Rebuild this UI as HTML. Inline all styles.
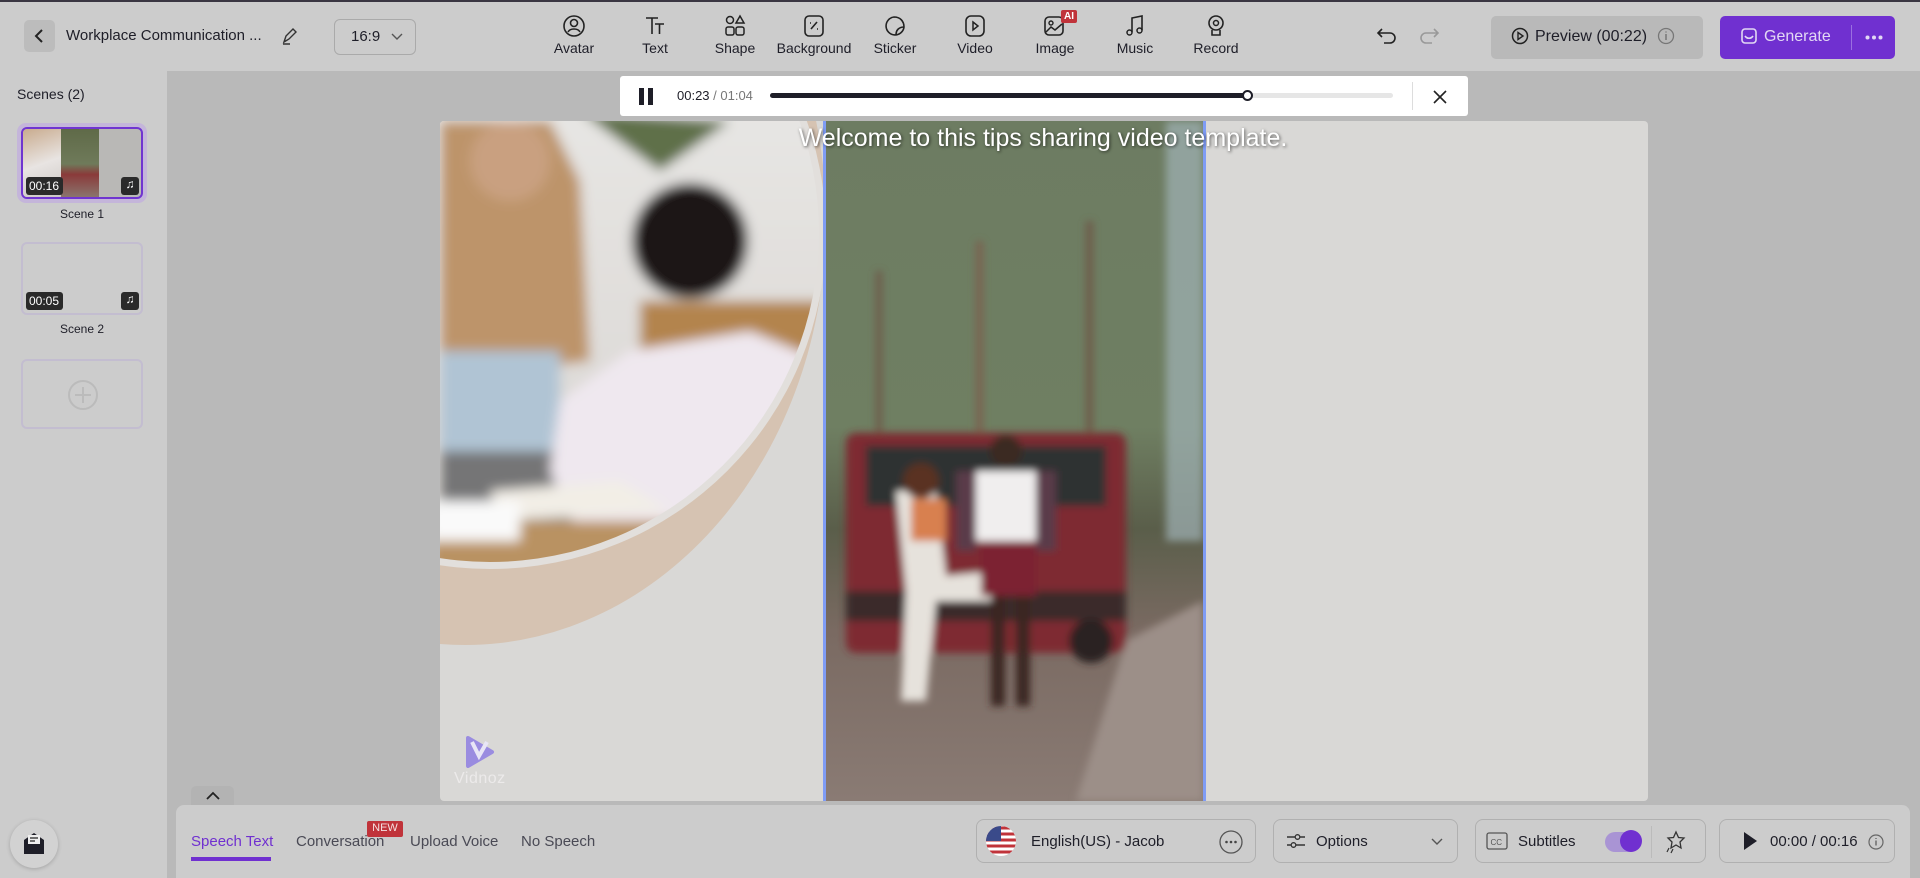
<!DOCTYPE html>
<html><head><meta charset="utf-8"><style>
*{box-sizing:border-box;margin:0;padding:0}
body{width:1920px;height:878px;overflow:hidden;background:#b9b9b9;font-family:"Liberation Sans",sans-serif;color:#1e1e28;position:relative}
.abs{position:absolute}
.top{left:0;top:0;width:1920px;height:71px;background:#cccccc;border-top:2px solid #3a3642}
.side{left:0;top:71px;width:167px;height:807px;background:#cccccc}
.tool{position:absolute;top:12px;width:80px;text-align:center;font-size:14px;color:#1e1e28}
.tool svg{display:block;margin:0 auto 2px}
.btn{position:absolute;border:1px solid #b0b0b0;border-radius:8px;display:flex;align-items:center;font-size:15px}
.tab{position:absolute;top:833px;font-size:15px;color:#4a4a55}
</style></head><body>
<div class="abs top">
 <div class="abs" style="left:24px;top:18px;width:31px;height:32px;background:#bcbcbc;border-radius:5px"><svg width="31" height="32"><path d="M18 10l-6 6 6 6" fill="none" stroke="#222" stroke-width="2"/></svg></div>
 <div class="abs" style="left:66px;top:25px;font-size:15px">Workplace Communication ...</div>
 <svg class="abs" style="left:280px;top:24px" width="20" height="20"><path d="M4 16l2-6 7-7 3 3-7 7z M3 18h7" fill="none" stroke="#333" stroke-width="1.4"/></svg>
 <div class="abs" style="left:334px;top:17px;width:82px;height:36px;border:1px solid #aaa;border-radius:6px;font-size:15px;padding:8px 0 0 16px">16:9<svg style="position:absolute;left:56px;top:13px" width="12" height="8"><path d="M1 1l5 5 5-5" fill="none" stroke="#555" stroke-width="1.4"/></svg></div>
 <div class="tool" style="left:534px"><svg width="24" height="24"><circle cx="12" cy="12" r="10" fill="none" stroke="#222" stroke-width="1.6"/><circle cx="12" cy="9" r="3.5" fill="none" stroke="#222" stroke-width="1.6"/><path d="M6 18c2-4 10-4 12 0" fill="none" stroke="#222" stroke-width="1.6"/></svg>Avatar</div>
 <div class="tool" style="left:615px"><svg width="24" height="24"><path d="M3 4h12M9 4v16M12 10h9M16.5 10v10" fill="none" stroke="#222" stroke-width="1.6"/></svg>Text</div>
 <div class="tool" style="left:695px"><svg width="24" height="24"><circle cx="7" cy="6" r="3.5" fill="none" stroke="#222" stroke-width="1.5"/><path d="M17 2l4 7h-8z" fill="none" stroke="#222" stroke-width="1.5"/><rect x="3" y="13" width="8" height="8" rx="2" fill="none" stroke="#222" stroke-width="1.5"/><rect x="13" y="13" width="8" height="8" rx="2" fill="none" stroke="#222" stroke-width="1.5"/></svg>Shape</div>
 <div class="tool" style="left:774px"><svg width="24" height="24"><rect x="3" y="2" width="18" height="20" rx="4" fill="none" stroke="#222" stroke-width="1.6"/><path d="M9 15l6-7M8 9h1M15 15h1" stroke="#222" stroke-width="1.6"/></svg>Background</div>
 <div class="tool" style="left:855px"><svg width="24" height="24"><path d="M21 13A9 9 0 1 1 11 3c6 0 10 4 10 10zM21 13c-5 0-8 3-8 8" fill="none" stroke="#222" stroke-width="1.6"/></svg>Sticker</div>
 <div class="tool" style="left:935px"><svg width="24" height="24"><rect x="3" y="2" width="18" height="20" rx="5" fill="none" stroke="#222" stroke-width="1.6"/><path d="M10 8l5 4-5 4z" fill="none" stroke="#222" stroke-width="1.5"/></svg>Video</div>
 <div class="tool" style="left:1015px"><svg width="24" height="24"><rect x="2" y="3" width="18" height="18" rx="4" fill="none" stroke="#222" stroke-width="1.6"/><circle cx="8" cy="9" r="2" fill="none" stroke="#222" stroke-width="1.4"/><path d="M3 18l5-5 4 3 7-6" fill="none" stroke="#222" stroke-width="1.5"/></svg>Image<span style="position:absolute;left:46px;top:-4px;background:#c0333a;color:#fff;font-size:10px;font-weight:bold;padding:1px 3px;border-radius:2px">AI</span></div>
 <div class="tool" style="left:1095px"><svg width="24" height="24"><path d="M9 18V4l10-2v14" fill="none" stroke="#222" stroke-width="1.6"/><circle cx="6.5" cy="18.5" r="2.5" fill="none" stroke="#222" stroke-width="1.5"/><circle cx="16.5" cy="16.5" r="2.5" fill="none" stroke="#222" stroke-width="1.5"/></svg>Music</div>
 <div class="tool" style="left:1176px"><svg width="24" height="24"><circle cx="12" cy="9" r="7" fill="none" stroke="#222" stroke-width="1.6"/><circle cx="12" cy="9" r="2.5" fill="none" stroke="#222" stroke-width="1.5"/><path d="M8 16v5h8v-5" fill="none" stroke="#222" stroke-width="1.6"/></svg>Record</div>
 <svg class="abs" style="left:1376px;top:24px" width="24" height="22"><path d="M6 3L2 7l4 4M2 7h12a5 5 0 0 1 0 10H8" fill="none" stroke="#222" stroke-width="1.6"/></svg>
 <svg class="abs" style="left:1416px;top:24px" width="24" height="22"><path d="M18 3l4 4-4 4M22 7H10a5 5 0 0 0 0 10h6" fill="none" stroke="#999" stroke-width="1.6"/></svg>
 <div class="abs" style="left:1491px;top:14px;width:212px;height:43px;background:#b9b9b9;border-radius:5px;font-size:16px;padding:11px 0 0 20px"><svg style="vertical-align:-4px;margin-right:6px" width="18" height="18"><circle cx="9" cy="9" r="7.5" fill="none" stroke="#222" stroke-width="1.5"/><path d="M7 5.5l5 3.5-5 3.5z" fill="none" stroke="#222" stroke-width="1.4"/></svg>Preview (00:22)<svg style="vertical-align:-4px;margin-left:10px" width="18" height="18"><circle cx="9" cy="9" r="7.5" fill="none" stroke="#777" stroke-width="1.3"/><path d="M9 7v6M9 4.5v1" stroke="#777" stroke-width="1.5"/></svg></div>
 <div class="abs" style="left:1720px;top:14px;width:175px;height:43px;background:#7030d0;border-radius:5px;color:#e2d8f4;font-size:16px;padding:11px 0 0 20px"><svg style="vertical-align:-4px;margin-right:6px" width="18" height="18"><rect x="2" y="2" width="14" height="14" rx="3" fill="none" stroke="#e2d8f4" stroke-width="1.6"/><path d="M5 9c2 3 6 3 8 0" fill="none" stroke="#e2d8f4" stroke-width="1.6"/></svg>Generate<div style="position:absolute;left:131px;top:9px;width:1px;height:25px;background:#9a70e0"></div><svg style="position:absolute;left:145px;top:19px" width="18" height="5"><circle cx="2.5" cy="2.5" r="2" fill="#e2d8f4"/><circle cx="9" cy="2.5" r="2" fill="#e2d8f4"/><circle cx="15.5" cy="2.5" r="2" fill="#e2d8f4"/></svg></div>
</div>
<div class="abs side">
 <div class="abs" style="left:17px;top:15px;font-size:14px">Scenes (2)</div>
 <div class="abs" style="left:17px;top:52px;width:130px;height:80px;border-radius:9px;background:#c4b5da"></div>
 <div class="abs" style="left:21px;top:56px;width:122px;height:72px;border:2px solid #7035d0;border-radius:6px;overflow:hidden;background:#b9b8b6">
  <div class="abs" style="left:0;top:0;width:38px;height:70px;background:linear-gradient(160deg,#c9ab8e,#e8e4e2 50%,#c8c4c0)"></div>
  <div class="abs" style="left:38px;top:0;width:38px;height:70px;background:linear-gradient(#5f6a48,#6f7a5a 50%,#8a3a3a 65%,#8a7a72)"></div>
  <div class="abs" style="left:3px;top:48px;width:37px;height:18px;background:#2a2a2a;border-radius:3px;color:#fff;font-size:12px;padding:2px 3px">00:16</div>
  <div class="abs" style="left:98px;top:48px;width:18px;height:18px;background:#2a2a2a;border-radius:3px;color:#fff;font-size:12px;text-align:center">♫</div>
 </div>
 <div class="abs" style="left:0;top:136px;width:164px;text-align:center;font-size:12px">Scene 1</div>
 <div class="abs" style="left:21px;top:171px;width:122px;height:73px;border:2px solid #c3bdd0;border-radius:6px">
  <div class="abs" style="left:3px;top:48px;width:37px;height:18px;background:#2a2a2a;border-radius:3px;color:#fff;font-size:12px;padding:2px 3px">00:05</div>
  <div class="abs" style="left:98px;top:48px;width:18px;height:18px;background:#2a2a2a;border-radius:3px;color:#fff;font-size:12px;text-align:center">♫</div>
 </div>
 <div class="abs" style="left:0;top:251px;width:164px;text-align:center;font-size:12px">Scene 2</div>
 <div class="abs" style="left:21px;top:288px;width:122px;height:70px;border:2px solid #c3bdd0;border-radius:6px"><svg style="position:absolute;left:44px;top:18px" width="32" height="32"><circle cx="16" cy="16" r="14" fill="none" stroke="#bbb" stroke-width="2"/><path d="M16 8v16M8 16h16" stroke="#bbb" stroke-width="2"/></svg></div>
</div>
<!-- player bar -->
<div class="abs" style="left:620px;top:76px;width:848px;height:40px;background:#fff;border-radius:3px">
 <div class="abs" style="left:19px;top:12px;width:5px;height:17px;background:#1e1e28"></div><div class="abs" style="left:28px;top:12px;width:5px;height:17px;background:#1e1e28"></div>
 <div class="abs" style="left:57px;top:12px;font-size:13px">00:23<span style="color:#777"> / 01:04</span></div>
 <div class="abs" style="left:150px;top:17px;width:623px;height:5px;background:#e6e6e6;border-radius:3px"></div>
 <div class="abs" style="left:150px;top:17px;width:478px;height:5px;background:#1e1e28;border-radius:3px"></div>
 <div class="abs" style="left:622px;top:14px;width:11px;height:11px;border:2px solid #1e1e28;border-radius:50%;background:#fff"></div>
 <div class="abs" style="left:792px;top:6px;width:1px;height:28px;background:#ddd"></div>
 <svg class="abs" style="left:812px;top:13px" width="16" height="16"><path d="M2 2l12 12M14 2L2 14" stroke="#222" stroke-width="1.6"/></svg>
</div>
<!-- slide -->
<div class="abs" style="left:440px;top:121px;width:1208px;height:680px;background:#d9d8d6;border-radius:4px;overflow:hidden">
 <svg class="abs" style="left:0;top:0" width="383" height="680">
  <defs><clipPath id="c"><circle cx="50" cy="112" r="329"/></clipPath>
  <filter id="bl"><feGaussianBlur stdDeviation="6"/></filter>
  <linearGradient id="w" x1="0" y1="0" x2="0" y2="1"><stop offset="0" stop-color="#e7e6e4"/><stop offset="1" stop-color="#d8d4d0"/></linearGradient></defs>
  <ellipse cx="25" cy="99" rx="361" ry="425" fill="#d6c3b2"/>
  <circle cx="50" cy="112" r="336" fill="#e2dfdc"/>
  <g clip-path="url(#c)"><g filter="url(#bl)">
   <rect x="-20" y="-20" width="420" height="480" fill="url(#w)"/>
   <rect x="200" y="180" width="183" height="150" fill="#b3844e"/>
   <path d="M0 0 L110 0 L140 60 L150 240 L0 260z" fill="#bd946a"/>
   <circle cx="70" cy="40" r="40" fill="#c9a080"/>
   <rect x="0" y="230" width="120" height="110" fill="#b0c4d4"/>
   <rect x="0" y="330" width="170" height="90" fill="#747476"/>
   <circle cx="250" cy="120" r="58" fill="#1c1614"/>
   <path d="M120 280 L190 230 L310 210 L383 240 L383 420 L150 440 L110 350z" fill="#efe8ef"/>
   <rect x="-10" y="400" width="400" height="70" fill="#b99262"/>
   <path d="M50 370 L180 360 L230 390 L60 400z" fill="#f2eee6"/>
   <rect x="-10" y="380" width="90" height="40" fill="#fafafa"/>
   <path d="M140 -10 L220 50 L290 0z" fill="#5e7048"/>
  </g></g>
 </svg>
 <div class="abs" style="left:383px;top:0;width:383px;height:680px;border-left:3px solid #7f9cf5;border-right:3px solid #7f9cf5;overflow:hidden">
  <svg width="377" height="680">
   <defs><linearGradient id="g" x1="0" y1="0" x2="0" y2="1"><stop offset="0" stop-color="#6d7c62"/><stop offset=".45" stop-color="#6f7f62"/><stop offset=".6" stop-color="#5a5e4a"/><stop offset=".75" stop-color="#7a6a62"/><stop offset="1" stop-color="#8a7b74"/></linearGradient>
   <filter id="b2"><feGaussianBlur stdDeviation="4"/></filter></defs>
   <rect width="377" height="680" fill="url(#g)"/>
   <g filter="url(#b2)">
   <rect x="340" y="0" width="37" height="420" fill="#9fb2b6" opacity=".7"/>
   <rect x="50" y="150" width="6" height="280" fill="#6e5a48"/><rect x="150" y="120" width="7" height="300" fill="#7a6250"/><rect x="260" y="100" width="7" height="320" fill="#6e5a48"/>
   <path d="M300 520 L377 480 L377 680 L250 680z" fill="#9c8f88"/>
   <rect x="20" y="312" width="280" height="220" rx="10" fill="#7e2a30"/>
   <rect x="40" y="325" width="240" height="60" fill="#2e3030"/>
   <rect x="20" y="470" width="280" height="30" fill="#3a2a2a"/>
   <circle cx="265" cy="520" r="22" fill="#2a2222"/>
   <path d="M70 370 L110 370 L120 455 L170 450 L170 480 L110 480 L100 580 L75 580 L80 470z" fill="#e6e2dc"/>
   <rect x="85" y="378" width="35" height="42" fill="#d88050"/>
   <circle cx="95" cy="360" r="18" fill="#5a3220"/>
   <rect x="150" y="350" width="60" height="70" fill="#f0eeee"/>
   <rect x="130" y="350" width="20" height="80" fill="#5a3a48"/><rect x="210" y="350" width="20" height="80" fill="#5a3a48"/>
   <rect x="155" y="420" width="55" height="55" fill="#7c2230"/>
   <rect x="165" y="475" width="14" height="110" fill="#3a2620"/><rect x="190" y="475" width="14" height="110" fill="#3a2620"/>
   <circle cx="180" cy="330" r="16" fill="#3a2a24"/>
   </g>
  </svg>
 </div>
 <div class="abs" style="left:303px;top:3px;width:600px;text-align:center;color:#fff;font-size:25px;text-shadow:1px 1px 3px rgba(0,0,0,.6)">Welcome to this tips sharing video template.</div>
 <svg class="abs" style="left:25px;top:615px" width="30" height="32"><path d="M3 2 L27 16 L3 30z" fill="#9a8ce0" stroke="#9a8ce0" stroke-width="4" stroke-linejoin="round"/><path d="M7 6 L14 20 L22 6" fill="none" stroke="#e8e6f6" stroke-width="4"/></svg>
 <div class="abs" style="left:14px;top:649px;color:#eceaea;font-size:16px;letter-spacing:.5px">Vidnoz</div>
</div>
<div class="abs" style="left:191px;top:786px;width:43px;height:22px;background:#b3b3b3;border-radius:5px 5px 0 0"><svg style="position:absolute;left:14px;top:5px" width="16" height="10"><path d="M2 8l6-6 6 6" fill="none" stroke="#222" stroke-width="1.8"/></svg></div>
<div class="abs" style="left:176px;top:805px;width:1734px;height:73px;background:#cccccc;border-radius:8px 8px 0 0"></div>
<div class="abs" style="left:10px;top:820px;width:48px;height:48px;border-radius:50%;background:#d2d2d2;box-shadow:0 1px 4px rgba(0,0,0,.2)"><svg style="position:absolute;left:13px;top:12px" width="22" height="24"><path d="M1 8l10-7 10 7v14H1z" fill="#1e1e28"/><rect x="5" y="3" width="12" height="9" fill="#eee"/><path d="M7 6h8M7 9h5" stroke="#222" stroke-width="1.2"/></svg></div>
<div class="tab" style="left:191px;color:#7030d0">Speech Text</div>
<div class="abs" style="left:191px;top:857px;width:80px;height:4px;background:#7030d0"></div>
<div class="tab" style="left:296px">Conversation</div>
<div class="abs" style="left:367px;top:821px;width:36px;height:16px;background:#c0333a;color:#f4e0e0;font-size:11px;text-align:center;padding-top:1px;border-radius:2px">NEW</div>
<div class="tab" style="left:410px">Upload Voice</div>
<div class="tab" style="left:521px">No Speech</div>
<div class="btn" style="left:976px;top:819px;width:280px;height:44px"><svg style="margin-left:8px" width="32" height="32"><defs><clipPath id="f"><circle cx="16" cy="16" r="15"/></clipPath></defs><g clip-path="url(#f)"><rect width="32" height="32" fill="#fff"/><path d="M0 3h32M0 9h32M0 15h32M0 21h32M0 27h32" stroke="#c0333a" stroke-width="3"/><rect width="16" height="16" fill="#3a4a8a"/></g></svg><span style="margin-left:14px">English(US) - Jacob</span><svg style="position:absolute;right:12px;top:10px" width="24" height="24"><circle cx="12" cy="12" r="11" fill="none" stroke="#555" stroke-width="1.3"/><circle cx="7.5" cy="12" r="1.3" fill="#444"/><circle cx="12" cy="12" r="1.3" fill="#444"/><circle cx="16.5" cy="12" r="1.3" fill="#444"/></svg></div>
<div class="btn" style="left:1273px;top:819px;width:185px;height:44px"><svg style="margin-left:12px" width="20" height="20"><path d="M1 6h8M14 6h5M1 14h4M10 14h9" stroke="#333" stroke-width="1.4"/><circle cx="11.5" cy="6" r="2.3" fill="none" stroke="#333" stroke-width="1.3"/><circle cx="7.5" cy="14" r="2.3" fill="none" stroke="#333" stroke-width="1.3"/></svg><span style="margin-left:10px">Options</span><svg style="position:absolute;right:14px;top:18px" width="12" height="8"><path d="M1 1l5 5 5-5" fill="none" stroke="#555" stroke-width="1.4"/></svg></div>
<div class="btn" style="left:1475px;top:819px;width:231px;height:44px"><svg style="margin-left:10px" width="22" height="20"><rect x="1" y="2" width="20" height="16" rx="2" fill="none" stroke="#555" stroke-width="1.3"/><text x="4.5" y="14" font-size="8" font-family="Liberation Sans" fill="#555">CC</text></svg><span style="margin-left:10px">Subtitles</span><div style="position:absolute;left:129px;top:12px;width:35px;height:20px;border-radius:10px;background:#a994d4"></div><div style="position:absolute;left:144px;top:10px;width:22px;height:22px;border-radius:50%;background:#7030d0"></div><div style="position:absolute;left:175px;top:6px;width:1px;height:32px;background:#bbb"></div><svg style="position:absolute;left:187px;top:10px" width="24" height="24"><path d="M13 2l2.5 5.5 5.5.5-4 4 1 6-5-3-5 3 1-6-4-4 5.5-.5z" fill="none" stroke="#333" stroke-width="1.3"/><path d="M6 18l-2 4M10 19l-2 4" stroke="#333" stroke-width="1.2"/></svg></div>
<div class="btn" style="left:1719px;top:819px;width:176px;height:44px"><svg style="margin-left:22px" width="16" height="20"><path d="M2 1l13 9-13 9z" fill="#1e1e28"/></svg><span style="margin-left:12px">00:00 / 00:16</span><svg style="position:absolute;right:10px;top:14px" width="16" height="16"><circle cx="8" cy="8" r="7" fill="none" stroke="#666" stroke-width="1.2"/><path d="M8 6.5v5M8 4v1" stroke="#666" stroke-width="1.4"/></svg></div>
</body></html>
